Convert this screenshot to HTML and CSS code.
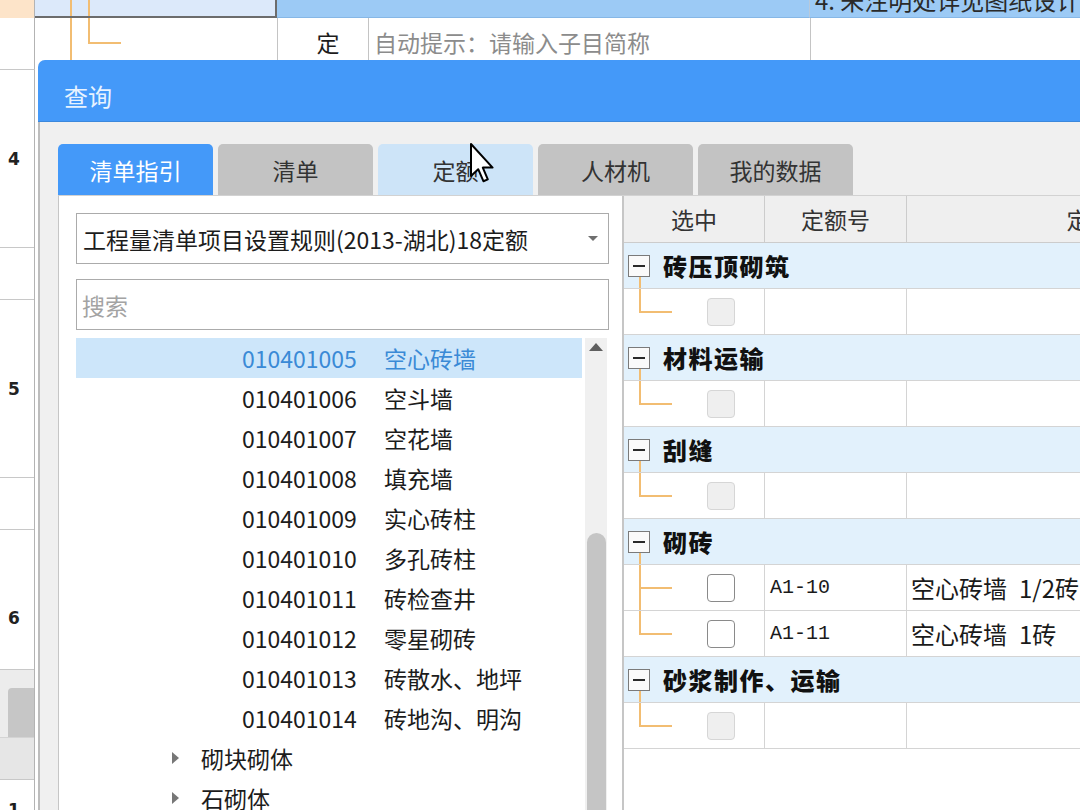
FILE: index.html
```html
<!DOCTYPE html>
<html lang="zh-CN">
<head>
<meta charset="utf-8">
<title>查询</title>
<link rel="stylesheet" href="styles.css">
</head>
<body>
<div class="sheet">
  <div class="srow r0">
    <div class="c c-num orange"></div>
    <div class="c c-a selcell"></div>
    <div class="c c-b blue"></div>
    <div class="c c-c blue"></div>
    <div class="c c-d blue"><div class="clip-text">4. 未注明处详见图纸设计</div></div>
  </div>
  <div class="srow r1">
    <div class="c c-num"></div>
    <div class="c c-a tree-bg"></div>
    <div class="c c-b">定</div>
    <div class="c c-c hint">自动提示：请输入子目简称</div>
    <div class="c c-d"></div>
  </div>
  <div class="lrows">
    <div class="lr tall"><span>4</span></div>
    <div class="lr short"></div>
    <div class="lr tall"><span>5</span></div>
    <div class="lr short"></div>
    <div class="lr last"><span>6</span></div>
    <div class="bp-band"></div>
    <div class="bp-tabs"><div class="bp-tab"></div></div>
    <div class="bp-head"></div>
    <div class="bp-row"><span>1</span></div>
  </div>
</div>

<div class="dialog">
  <div class="dlg-title">查询</div>
  <div class="dlg-body">
    <div class="tabs">
      <div class="tab active">清单指引</div>
      <div class="tab">清单</div>
      <div class="tab hover">定额</div>
      <div class="tab">人材机</div>
      <div class="tab">我的数据</div>
    </div>
    <div class="panel">
      <div class="lpane">
        <div class="select"><span>工程量清单项目设置规则(2013-湖北)18定额</span><span class="caret"></span></div>
        <div class="search">搜索</div>
        <div class="list">
          <div class="items">
            <div class="item current"><span class="code">010401005</span><span>空心砖墙</span></div>
            <div class="item"><span class="code">010401006</span><span>空斗墙</span></div>
            <div class="item"><span class="code">010401007</span><span>空花墙</span></div>
            <div class="item"><span class="code">010401008</span><span>填充墙</span></div>
            <div class="item"><span class="code">010401009</span><span>实心砖柱</span></div>
            <div class="item"><span class="code">010401010</span><span>多孔砖柱</span></div>
            <div class="item"><span class="code">010401011</span><span>砖检查井</span></div>
            <div class="item"><span class="code">010401012</span><span>零星砌砖</span></div>
            <div class="item"><span class="code">010401013</span><span>砖散水、地坪</span></div>
            <div class="item"><span class="code">010401014</span><span>砖地沟、明沟</span></div>
            <div class="item cat"><span class="tri"></span><span>砌块砌体</span></div>
            <div class="item cat"><span class="tri"></span><span>石砌体</span></div>
          </div>
          <div class="scroll">
            <div class="up"></div>
            <div class="thumb"></div>
          </div>
        </div>
      </div>
      <div class="rpane">
        <div class="grow ghead">
          <div class="gc ctr">选中</div>
          <div class="gc ctr">定额号</div>
          <div class="gc ctr">定额名称</div>
          <div class="gc"></div>
        </div>

        <div class="grp"><span class="minus"></span>砖压顶砌筑</div>
        <div class="grow">
          <div class="gc c1 tl"><span class="cb dis"></span></div>
          <div class="gc"></div><div class="gc"></div><div class="gc"></div>
        </div>

        <div class="grp"><span class="minus"></span>材料运输</div>
        <div class="grow">
          <div class="gc c1 tl"><span class="cb dis"></span></div>
          <div class="gc"></div><div class="gc"></div><div class="gc"></div>
        </div>

        <div class="grp"><span class="minus"></span>刮缝</div>
        <div class="grow">
          <div class="gc c1 tl"><span class="cb dis"></span></div>
          <div class="gc"></div><div class="gc"></div><div class="gc"></div>
        </div>

        <div class="grp"><span class="minus"></span>砌砖</div>
        <div class="grow">
          <div class="gc c1 tm"><span class="cb"></span></div>
          <div class="gc code2">A1-10</div>
          <div class="gc name">空心砖墙&ensp;1/2砖</div>
          <div class="gc"></div>
        </div>
        <div class="grow">
          <div class="gc c1 tl"><span class="cb"></span></div>
          <div class="gc code2">A1-11</div>
          <div class="gc name">空心砖墙&ensp;1砖</div>
          <div class="gc"></div>
        </div>

        <div class="grp"><span class="minus"></span>砂浆制作、运输</div>
        <div class="grow">
          <div class="gc c1 tl"><span class="cb dis"></span></div>
          <div class="gc"></div><div class="gc"></div><div class="gc"></div>
        </div>
      </div>
    </div>
  </div>
</div>

<svg class="cursor" width="26" height="42" viewBox="0 0 13 21" aria-hidden="true">
  <path d="M1 1 L1 17 L4.6 13.6 L7.2 19.6 L9.4 18.7 L6.9 12.8 L11.8 12.8 Z" fill="#fff" stroke="#000" stroke-width="1" stroke-linejoin="round"/>
</svg>
</body>
</html>
```

FILE: styles.css
```css
* { box-sizing: border-box; }
html, body { margin: 0; padding: 0; }
body {
  width: 1080px;
  height: 810px;
  overflow: hidden;
  position: relative;
  background: #fff;
  font-family: "Noto Sans CJK SC", "Noto Sans", sans-serif;
  color: #1c1c1c;
}

/* ---------- background sheet ---------- */
.sheet { display: flex; flex-direction: column; }
.srow {
  display: grid;
  grid-template-columns: 35px 242px 91px 442px 300px;
}
.r0 { height: 18px; }
.r1 { height: 52px; }
.c { overflow: hidden; }
.c-num { border-right: 1px solid #b3b3b3; }
.r1 .c-num { border-bottom: 1px solid #c8c8c8; }
.orange { background: #fde4c9; }
.selcell {
  background:
    linear-gradient(#f2bd72, #f2bd72) 35px 0 / 2px 100% no-repeat,
    linear-gradient(#f2bd72, #f2bd72) 53px 0 / 2px 100% no-repeat,
    #dce9fa;
  border-right: 2px solid #6c6c6c;
  border-bottom: 2px solid #6c6c6c;
}
.blue {
  background: #9ccaf5;
  border-bottom: 1px solid #86b7e6;
}
.r0 .c-c { border-right: 1px solid #b9c9da; }
.clip-text {
  margin-top: -14px;
  padding-left: 5px;
  font-size: 24px;
  line-height: 28px;
  color: #2a2a2a;
  white-space: nowrap;
}
.tree-bg {
  background:
    linear-gradient(#f2bd72, #f2bd72) 35px 0 / 2px 100% no-repeat,
    linear-gradient(#f2bd72, #f2bd72) 53px 0 / 2px 25px no-repeat,
    linear-gradient(#f2bd72, #f2bd72) 53px 24px / 33px 2px no-repeat;
}
.r1 .c-b {
  border-left: 1px solid #c4c4c4;
  font-size: 23px;
  display: flex;
  justify-content: center;
  padding: 8px 0 0 10px;
  line-height: 32px;
}
.r1 .c-c {
  border-left: 1px solid #c4c4c4;
  font-size: 23px;
  color: #8c8c8c;
  padding: 8px 0 0 5px;
  line-height: 32px;
  white-space: nowrap;
}
.r1 .c-d { border-left: 1px solid #c4c4c4; }

.lrows {
  width: 35px;
  display: flex;
  flex-direction: column;
  border-right: 1px solid #b3b3b3;
}
.lr {
  border-bottom: 1px solid #c8c8c8;
  display: flex;
  align-items: center;
  justify-content: center;
  padding-right: 6px;
  font-family: "DejaVu Sans", sans-serif;
  font-weight: 700;
  font-size: 17px;
  color: #222;
}
.lr.tall { height: 178px; }
.lr.short { height: 52px; }
.lr.last { height: 140px; align-items: flex-start; padding-top: 78px; }
.bp-band { height: 18px; background: #ececec; }
.bp-tabs { height: 49px; background: #ececec; padding-left: 8px; display: flex; }
.bp-tab { flex: 1; background: #c6c6c6; border-radius: 4px 0 0 0; }
.bp-head { height: 43px; background: #e6e6e6; border-top: 1px solid #d4d4d4; border-bottom: 1px solid #c8c8c8; }
.bp-row {
  height: 40px;
  display: flex;
  align-items: flex-end;
  justify-content: center;
  padding-right: 6px;
  font-family: "DejaVu Sans", sans-serif;
  font-weight: 700;
  font-size: 17px;
}

/* ---------- dialog ---------- */
.dialog {
  position: absolute;
  left: 38px;
  top: 60px;
  width: 1070px;
  height: 770px;
  border-top-left-radius: 7px;
  overflow: hidden;
  background: #f0f0f0;
  display: flex;
  flex-direction: column;
}
.dlg-title {
  height: 62px;
  flex: none;
  background: #4499f9;
  color: #e8f3ff;
  font-size: 24px;
  padding: 10px 0 0 26px;
  display: flex;
  align-items: center;
  border-bottom: 1px solid #3c88dc;
}
.dlg-body {
  flex: 1;
  border-left: 2px solid #bdbdbd;
  padding: 22px 0 0 18px;
  display: flex;
  flex-direction: column;
}
.tabs { display: flex; gap: 5px; height: 51px; flex: none; }
.tab {
  width: 155px;
  border-radius: 5px 5px 0 0;
  background: #c3c3c3;
  color: #333;
  font-size: 23px;
  display: flex;
  align-items: center;
  justify-content: center;
}
.tab.active { background: #4499f9; color: #fff; }
.tab.hover { background: #cde4f8; }

.panel {
  flex: 1;
  background: #fff;
  border-left: 1px solid #c6c6c6;
  border-top: 1px solid #d2d2d2;
  display: flex;
}

/* left pane */
.lpane {
  width: 563px;
  flex: none;
  padding: 17px 13px 0 17px;
  display: flex;
  flex-direction: column;
}
.select {
  height: 51px;
  border: 1px solid #ababab;
  display: flex;
  align-items: center;
  justify-content: space-between;
  padding: 0 10px 0 6px;
  font-size: 23px;
  white-space: nowrap;
}
.caret {
  width: 0; height: 0;
  border-left: 5px solid transparent;
  border-right: 5px solid transparent;
  border-top: 5px solid #6f6f6f;
}
.search {
  margin-top: 15px;
  height: 51px;
  border: 1px solid #ababab;
  color: #a3a3a3;
  font-size: 23px;
  padding-left: 5px;
  display: flex;
  align-items: center;
}
.list { margin-top: 8px; flex: 1; display: flex; gap: 3px; }
.items { width: 506px; }
.item {
  height: 40px;
  display: flex;
  align-items: center;
  font-size: 23px;
  white-space: nowrap;
}
.item .code { width: 142px; margin-left: 166px; }
.item.current { background: #cde6fa; color: #3a8ad6; }
.item.cat .tri {
  margin-left: 96px;
  margin-right: 22px;
  width: 0; height: 0;
  border-top: 6px solid transparent;
  border-bottom: 6px solid transparent;
  border-left: 7px solid #777;
}
.scroll {
  width: 22px;
  background: #f0f0f0;
  display: flex;
  flex-direction: column;
  align-items: center;
}
.up {
  margin-top: 5px;
  width: 0; height: 0;
  border-left: 7px solid transparent;
  border-right: 7px solid transparent;
  border-bottom: 8px solid #5f5f5f;
}
.thumb {
  margin-top: 182px;
  width: 19px;
  height: 320px;
  background: #c5c5c5;
  border-radius: 10px;
}

/* right pane (grid) */
.rpane {
  flex: 1;
  border-left: 2px solid #c6c6c6;
  display: flex;
  flex-direction: column;
}
.grow {
  display: grid;
  grid-template-columns: 141px 142px 412px 300px;
  height: 46px;
  flex: none;
  border-bottom: 1px solid #d4d4d4;
}
.gc {
  border-right: 1px solid #d4d4d4;
  display: flex;
  align-items: center;
  white-space: nowrap;
  overflow: hidden;
}
.ctr { justify-content: center; }
.ghead {
  height: 47px;
  background: #efefef;
  border-bottom: 1px solid #cccccc;
  font-size: 23px;
  color: #333;
}
.ghead .gc { border-right-color: #cccccc; }

.grp {
  height: 46px;
  flex: none;
  display: flex;
  align-items: center;
  padding-left: 4px;
  border-bottom: 1px solid #d4d4d4;
  font-size: 24px;
  font-weight: 900;
  letter-spacing: 1.5px;
  color: #111;
  background:
    linear-gradient(#f2bd72, #f2bd72) 15px 34px / 2px 12px no-repeat,
    #e2f1fc;
}
.minus {
  width: 22px;
  height: 22px;
  flex: none;
  margin-right: 13px;
  border: 1px solid #7a7a7a;
  background: #fafafa;
  display: flex;
  align-items: center;
  justify-content: center;
}
.minus::before {
  content: "";
  width: 12px;
  height: 2px;
  background: #2a2a2a;
}

.c1 { padding-left: 83px; }
.tl {
  background:
    linear-gradient(#f2bd72, #f2bd72) 15px 0 / 2px 50% no-repeat,
    linear-gradient(#f2bd72, #f2bd72) 15px 50% / 33px 2px no-repeat;
}
.tm {
  background:
    linear-gradient(#f2bd72, #f2bd72) 15px 0 / 2px 100% no-repeat,
    linear-gradient(#f2bd72, #f2bd72) 15px 50% / 33px 2px no-repeat;
}
.cb {
  width: 28px;
  height: 28px;
  border: 1px solid #8a8a8a;
  border-radius: 4px;
  background: #fff;
}
.cb.dis { background: #efefef; border-color: #d6d6d6; }
.code2 {
  font-family: "Liberation Mono", monospace;
  font-size: 20px;
  padding-left: 5px;
  color: #1a1a1a;
}
.name {
  font-size: 24px;
  padding-left: 4px;
  color: #1a1a1a;
}

.cursor {
  position: absolute;
  left: 469px;
  top: 142px;
}
```
